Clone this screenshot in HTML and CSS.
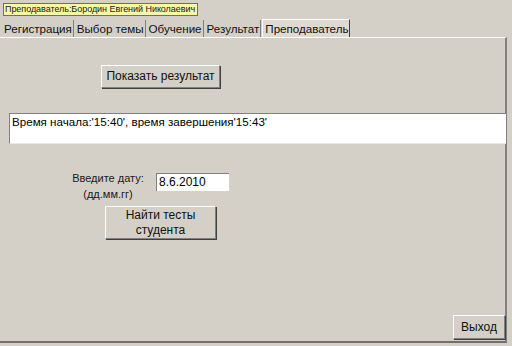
FILE: index.html
```html
<!DOCTYPE html>
<html>
<head>
<meta charset="utf-8">
<link rel="stylesheet" href="styles.css">
</head>
<body>
<div class="app">
  <div class="caption">Преподаватель:Бородин Евгений Николаевич</div>
  <div class="tabs">
    <div class="tab">Регистрация</div>
    <div class="tab">Выбор темы</div>
    <div class="tab">Обучение</div>
    <div class="tab">Результат</div>
    <div class="tab active">Преподаватель</div>
  </div>
  <div class="panel">
    <div class="btn show">Показать результат</div>
    <div class="memo">Время начала:'15:40', время завершения'15:43'</div>
    <div class="daterow">
      <div class="datelabel">Введите дату:<br><span class="fmt">(дд.мм.гг)</span></div>
      <div class="edit">8.6.2010</div>
    </div>
    <div class="btn find">Найти тесты<br>студента</div>
    <div class="spacer"></div>
    <div class="footer"><div class="btn exit">Выход</div></div>
  </div>
</div>
</body>
</html>
```
FILE: styles.css
```css
html, body {
  margin: 0;
  padding: 0;
  background: #d4d0c8;
}
.app {
  width: 512px;
  height: 346px;
  display: flex;
  flex-direction: column;
  font-family: "Liberation Sans", Arial, sans-serif;
  font-size: 12px;
  color: #000;
  overflow: hidden;
}
.caption {
  align-self: flex-start;
  margin: 3px 0 0 3px;
  height: 11px;
  line-height: 11px;
  padding: 0 2px 0 1px;
  font-size: 9px;
  letter-spacing: -0.05px;
  background: #f8f6a8;
  border: 1px solid #6e6e6e;
  color: #202020;
}
.tabs {
  display: flex;
  margin-top: 4px;
  height: 17px;
  padding-left: 2px;
}
.tab {
  height: 17px;
  line-height: 17px;
  padding: 0 1px 0 2px;
  margin-right: 1px;
  border-right: 1px solid #808080;
  font-size: 11.6px;
  white-space: nowrap;
  color: #101010;
}
.tab.active {
  background: #dedad2;
  border-left: 1px solid #ffffff;
  border-top: 1px solid #ffffff;
  border-right: 1px solid #404040;
  height: 17px;
  margin-top: -1px;
  padding-bottom: 1px;
}
.panel {
  flex: 1;
  width: 505px;
  border-top: 1px solid #ffffff;
  border-right: 2px solid #808080;
  border-bottom: 2px solid #707070;
  display: flex;
  flex-direction: column;
  align-items: flex-start;
  margin-bottom: 3px;
}
.btn {
  background: #d4d0c8;
  border-top: 1px solid #ffffff;
  border-left: 1px solid #ffffff;
  border-right: 1px solid #808080;
  border-bottom: 1px solid #808080;
  box-shadow: 1px 1px 0 #404040;
  text-align: center;
  font-size: 12px;
  box-sizing: border-box;
  color: #101010;
}
.show {
  margin: 27px 0 0 101px;
  width: 119px;
  height: 23px;
  line-height: 21px;
}
.memo {
  margin: 25px 0 0 9px;
  width: 497px;
  height: 31px;
  box-sizing: border-box;
  background: #ffffff;
  border-top: 1px solid #808080;
  border-left: 1px solid #808080;
  border-bottom: 1px solid #e8e8e8;
  padding: 0 2px;
  line-height: 16px;
  font-size: 11.6px;
}
.daterow {
  display: flex;
  align-items: flex-start;
  margin: 29px 0 0 69px;
}
.datelabel {
  width: 78px;
  margin-top: -3px;
  text-align: center;
  font-size: 11px;
  line-height: 16px;
  color: #1a1a1a;
}
.edit {
  margin-left: 9px;
  width: 73px;
  height: 18px;
  box-sizing: border-box;
  background: #ffffff;
  border-top: 1px solid #808080;
  border-left: 1px solid #808080;
  padding-left: 2px;
  line-height: 16px;
}
.find {
  margin: 4px 0 0 105px;
  width: 111px;
  height: 33px;
  line-height: 15px;
  padding-top: 1px;
}
.spacer {
  flex: 1;
}
.footer {
  align-self: stretch;
  display: flex;
  justify-content: flex-end;
  padding: 0 0 2px 0;
}
.exit {
  width: 52px;
  height: 24px;
  line-height: 22px;
}
```
